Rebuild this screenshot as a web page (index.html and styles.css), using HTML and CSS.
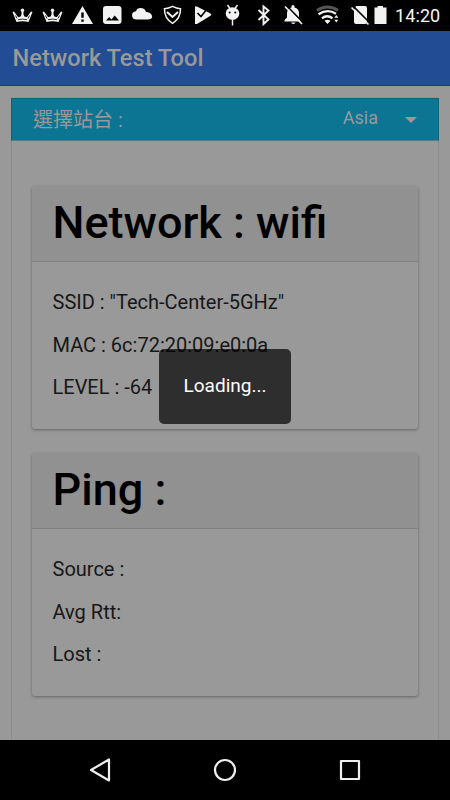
FILE: index.html
```html
<!DOCTYPE html>
<html lang="zh-Hant">
<head>
<meta charset="utf-8">
<title>Network Test Tool</title>
<link rel="stylesheet" href="styles.css">
</head>
<body>
<div class="screen">
  <div class="status">
    <svg class="icons" width="388" height="31" viewBox="0 0 388 31" fill="#f2f2f2">
      <g id="crown"><path d="M12.500 12l1.500-.5 4 5.500q3 .5 3.500-2.500V11h2v3.500q.5 3 3.500 2.500l4-5.500 1.500.5L28.500 22q-6-1.500-12 0z"/><circle cx="22.500" cy="10.300" r="1.700"/><path d="M15.500 15.500l1.500 3M29.500 15.500l-1.500 3M18 19.700q4.500-1.200 9 0" fill="none" stroke="#000" stroke-width=".8"/></g>
      <use href="#crown" x="30"/>
      <path d="M82.500 6L93 24H72zM81.300 12.500v5.300h2.400v-5.300zM81.300 19.500v2.300h2.400v-2.300z" fill-rule="evenodd"/>
      <path d="M106 6h12.500q3 0 3 3v12q0 3-3 3H106q-3 0-3-3V9q0-3 3-3zM106 20.500h13l-4.300-5-3.300 4-2.200-2.500z" fill-rule="evenodd"/>
      <path d="M136.500 19.500q-4.500 0-4.500-4.200 0-3.500 4-4 1-3.300 4.500-3.300 4.500 0 5.500 4 3.500-.5 5.500 2.500 2 4.500-3 5z"/>
      <g fill="none" stroke="#f2f2f2"><path d="M164.500 8.800q4-.4 8-2.500 4 2.100 8 2.500.3 9.500-8 14.500-8.300-5-8-14.500z" stroke-width="1.500"/><path d="M167 12l5.500 5 5.500-5" stroke-width="2"/></g>
      <path d="M195 6.500h2l13.500 7q1.500 1.200 0 2.200L197 24h-2z"/><path d="M197.500 13l3.500 3.500 6-7.500" fill="none" stroke="#000" stroke-width="1.600"/>
      <path d="M227.500 5l2.500 3.500M237.500 5L235 8.500M232.500 18v7.500" stroke="#f2f2f2" stroke-width="1.500"/><ellipse cx="232.500" cy="13.500" rx="6.800" ry="6.300"/><g fill="#000"><circle cx="229.700" cy="12.500" r="1"/><circle cx="235.300" cy="12.500" r="1"/></g>
      <path d="M258.500 10l10 9.500-5 4.500V6.500l5 4-10 9.500" fill="none" stroke="#f2f2f2" stroke-width="1.900"/>
      <path d="M284.500 21.500v-1.500l2.500-2.500v-4q0-5 4.500-6V6q1.500-2 3 0v1.500q4.500 1 4.500 6v4l2.500 2.500v1.500zM291 22.500h4.500q-2.200 3-4.500 0z"/><path d="M286.500 5.500L303 22.500" stroke="#000" stroke-width="1.700"/><path d="M285 6.500L302 24" stroke="#f2f2f2" stroke-width="1.700"/>
      <g fill="none" stroke="#f2f2f2" stroke-width="2.300"><path d="M317 10.500q10.500-7 21 0" stroke="#555" stroke-width="3"/><path d="M318.500 14.300q9-6 17.500-.5"/><path d="M322 18.300q5-4 10.500 0"/></g><path d="M324.500 20.800q3-2 6 0L327.500 24zM336.300 15l2 2.800h-4zM336.300 22.500l2-2.800h-4z"/>
      <path d="M356 6h9q2 0 2 2v14q0 2-2 2h-9q-2 0-2-2V10.500z"/><path d="M353.500 6.500L370 23" stroke="#000" stroke-width="1.700"/><path d="M351.500 7.500L368.500 24.500" stroke="#f2f2f2" stroke-width="1.700"/>
      <path d="M374.500 7.500h3V6h5.500v1.500h3.500V24h-12z"/>
    </svg>
    <span class="clock">14:20</span>
  </div>
  <header class="toolbar">Network Test Tool</header>
  <main class="content">
    <section class="panel">
      <div class="station"><span class="station-label">選擇站台 :</span><span class="station-value">Asia</span><span class="arrow"></span></div>
      <div class="cards">
        <article class="card">
          <h1>Network : wifi</h1>
          <div class="rows"><p>SSID : "Tech-Center-5GHz"</p><p>MAC : 6c:72:20:09:e0:0a</p><p>LEVEL : -64</p></div>
        </article>
        <article class="card">
          <h1>Ping :</h1>
          <div class="rows"><p>Source :</p><p>Avg Rtt:</p><p>Lost :</p></div>
        </article>
      </div>
    </section>
  </main>
  <nav class="nav">
    <svg width="450" height="60" fill="none" stroke="#eee" stroke-width="2.200" stroke-linejoin="round"><path d="M109 19.500v21L91 30z"/><circle cx="225" cy="30" r="10"/><path d="M341 21h18v18h-18z"/></svg>
  </nav>
  <div class="loading">Loading...</div>
</div>
</body>
</html>
```

FILE: styles.css
```css
* { box-sizing: border-box; }
body { margin: 0; background: #000; font-family: Roboto, "Noto Sans CJK TC", sans-serif; }
.screen { position: relative; width: 450px; height: 800px; display: flex; flex-direction: column; overflow: hidden; }
.status { height: 31px; display: flex; background: #000; color: #f5f5f5; flex: none; }
.icons { display: block; flex: none; }
.clock { margin-left: 7px; font-size: 18px; line-height: 31px; letter-spacing: 0.1px; white-space: nowrap; }
.toolbar { height: 55px; flex: none; padding-left: 12.5px; background: #224c94; border-bottom: 1px solid #173f88; color: #999; font-size: 23.6px; font-weight: 500; line-height: 55px; }
.content { height: 654px; flex: none; overflow: hidden; padding: 11px 11px 0; background: #999; }
.panel { height: 700px; border: 1px solid #8b8b8b; border-top-color: #909090; }
.station { height: 43px; margin: 0 -1px; display: flex; align-items: center; padding: 0 20px 0 21px; background: #0b7593; border: 1px solid #08667f; border-bottom-color: #5c7a82; color: #999; }
.station-label { flex: 1; font-size: 20px; line-height: 40px; }
.station-value { font-size: 18px; line-height: 20px; margin: 0 27px 4px 0; }
.arrow { border: 6.5px solid transparent; border-top-color: #999; border-bottom: 0; margin: 0 1px 0 0; }
.cards { padding: 45px 20px 0; display: flex; flex-direction: column; gap: 24px; }
.card { height: 243px; border-radius: 3px; background: #999; box-shadow: 0 1px 3px rgba(0, 0, 0, .35); overflow: hidden; }
h1 { margin: 0; height: 75.5px; padding-left: 20.5px; background: #919191; border-bottom: 1px solid #808080; color: #000; font-size: 45px; font-weight: 500; line-height: 74px; white-space: nowrap; }
.rows { padding: 19.5px 20.5px; }
.rows p { margin: 0; height: 42.5px; line-height: 42px; font-size: 20px; color: #171717; white-space: nowrap; }
.nav { height: 60px; flex: none; background: #000; }
.nav svg { display: block; }
.loading { position: absolute; left: 159px; top: 349px; width: 132px; height: 75px; border-radius: 5px; background: rgba(0, 0, 0, .7); color: #fff; font-size: 19px; line-height: 74px; text-align: center; }
```
